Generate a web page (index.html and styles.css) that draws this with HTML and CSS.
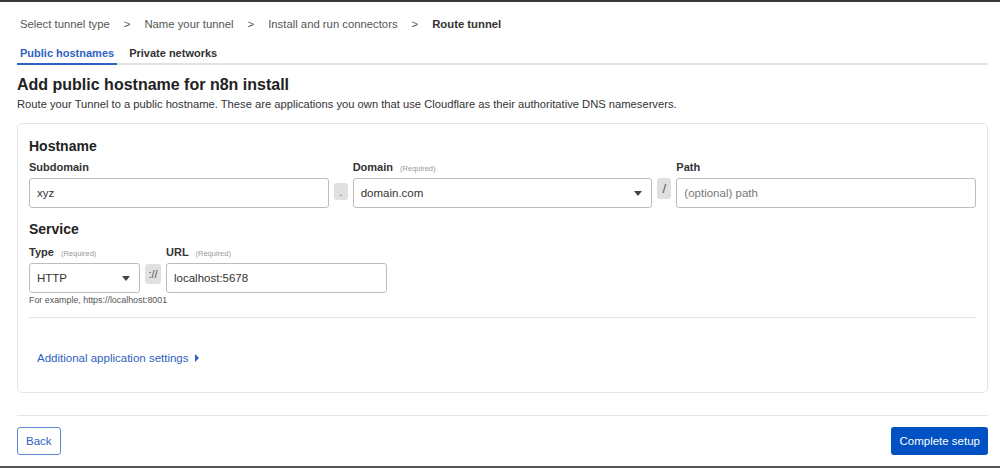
FILE: index.html
```html
<!DOCTYPE html>
<html lang="en">
<head>
    <meta charset="UTF-8">
    <meta name="viewport" content="width=device-width, initial-scale=1.0">
    <title>Route tunnel</title>
    <link rel="stylesheet" href="styles.css">
</head>
<body>
    <div class="page">

        <!-- Pasos del asistente -->
        <nav class="steps">
            <span>Select tunnel type</span>
            <span class="sep">&gt;</span>
            <span>Name your tunnel</span>
            <span class="sep">&gt;</span>
            <span>Install and run connectors</span>
            <span class="sep">&gt;</span>
            <span class="current">Route tunnel</span>
        </nav>

        <div class="tabs">
            <a class="tab active">Public hostnames</a>
            <a class="tab">Private networks</a>
        </div>

        <h1>Add public hostname for n8n install</h1>
        <p class="intro">Route your Tunnel to a public hostname. These are applications you own that use Cloudflare as their authoritative DNS nameservers.</p>

        <div class="card">
            <h2>Hostname</h2>
            <div class="row">
                <div class="field grow">
                    <label>Subdomain</label>
                    <input class="input" type="text" value="xyz">
                </div>
                <span class="addon dot">.</span>
                <div class="field grow">
                    <label>Domain <small>(Required)</small></label>
                    <div class="select">domain.com<span class="caret"></span></div>
                </div>
                <span class="addon slash">/</span>
                <div class="field grow">
                    <label>Path</label>
                    <input class="input" type="text" placeholder="(optional) path">
                </div>
            </div>

            <h2 class="service">Service</h2>
            <div class="row">
                <div class="field type">
                    <label>Type <small>(Required)</small></label>
                    <div class="select">HTTP<span class="caret"></span></div>
                    <p class="hint">For example, https://localhost:8001</p>
                </div>
                <span class="addon scheme">://</span>
                <div class="field url">
                    <label>URL <small>(Required)</small></label>
                    <input class="input" type="text" value="localhost:5678">
                </div>
            </div>

            <hr class="divider">

            <a class="more">Additional application settings <span class="arrow"></span></a>
        </div>

        <div class="footer">
            <button class="btn btn-outline">Back</button>
            <button class="btn btn-primary">Complete setup</button>
        </div>
    </div>
</body>
</html>
```

FILE: styles.css
```css
body {
    font-family: 'Liberation Sans', Arial, sans-serif;
    background-color: #FFFFFF;
    color: #222222;
    margin: 0;
    padding: 0;
    border-top: 2px solid #3a3a3a;
    border-bottom: 2px solid #555555;
    height: 464px;
    overflow: hidden;
}

.page {
    padding: 0 12px 0 17px;
}

.steps {
    display: flex;
    gap: 14px;
    font-size: 11.3px;
    color: #555555;
    padding: 16px 0 0 3px;
    height: 16px;
}

.steps .current {
    font-weight: bold;
    color: #333333;
}

.tabs {
    display: flex;
    gap: 9px;
    margin-top: 13px;
    border-bottom: 2px solid #e2e2e2;
}

.tab {
    font-size: 11px;
    font-weight: bold;
    color: #333333;
    padding: 0 3px 4px 3px;
    margin-bottom: -2px;
}

.tab.active {
    color: #2f62c4;
    border-bottom: 2px solid #2f62c4;
}

h1 {
    font-size: 16px;
    margin: 11px 0 0 0;
    color: #222222;
}

.intro {
    font-size: 11.2px;
    color: #333333;
    margin: 4px 0 0 0;
}

.card {
    margin-top: 13px;
    border: 1px solid #e4e4e4;
    border-radius: 5px;
    padding: 14px 11px 0 11px;
    height: 254px;
}

h2 {
    font-size: 14px;
    font-weight: 600;
    margin: 0;
    color: #222222;
}

h2.service {
    margin: 13px 0 2px 0;
}

.row {
    display: flex;
    gap: 5px;
    align-items: flex-start;
}

.field {
    display: flex;
    flex-direction: column;
}

.field.grow {
    flex: 1;
}

.field.type {
    width: 111px;
}

.field.url {
    width: 221px;
}

label {
    font-size: 11px;
    font-weight: bold;
    color: #333333;
    margin: 7px 0 4px 0;
    height: 13px;
}

label small {
    font-size: 7.5px;
    font-weight: normal;
    color: #999999;
    margin-left: 4px;
}

.input, .select {
    box-sizing: border-box;
    height: 30px;
    border: 1px solid #bdbdbd;
    border-radius: 3px;
    padding: 0 7px;
    font-family: inherit;
    font-size: 11.5px;
    color: #333333;
    background: #ffffff;
}

.input::placeholder {
    color: #777777;
}

.select {
    display: flex;
    align-items: center;
    justify-content: space-between;
}

.caret {
    width: 0;
    height: 0;
    border-left: 4px solid transparent;
    border-right: 4px solid transparent;
    border-top: 5px solid #444444;
    margin-right: 2px;
}

/* cajitas grises entre campos */
.addon {
    width: 14px;
    background: #e0e0e0;
    border-radius: 3px;
    font-size: 11px;
    color: #555555;
    display: flex;
    align-items: center;
    justify-content: center;
}

.addon.dot {
    margin-top: 29px;
    height: 17px;
}

.addon.slash {
    margin-top: 24px;
    height: 21px;
    font-size: 13px;
}

.addon.scheme {
    width: 16px;
    margin-top: 25px;
    height: 20px;
}

.hint {
    font-size: 8.9px;
    color: #555555;
    margin: 2px 0 0 0;
    white-space: nowrap;
}

.divider {
    border: none;
    border-top: 1px solid #e4e4e4;
    margin: 12px 0 0 0;
}

.more {
    display: inline-flex;
    align-items: center;
    gap: 6px;
    margin: 34px 0 0 8px;
    font-size: 11.5px;
    color: #2f5fbf;
}

.arrow {
    width: 0;
    height: 0;
    border-top: 4px solid transparent;
    border-bottom: 4px solid transparent;
    border-left: 4px solid #2f5fbf;
}

.footer {
    margin-top: 22px;
    border-top: 1px solid #e4e4e4;
    padding-top: 11px;
    display: flex;
    justify-content: space-between;
}

.btn {
    font-family: inherit;
    font-size: 11.5px;
    height: 28px;
    border-radius: 3px;
    padding: 0 8px;
    cursor: pointer;
}

.btn-outline {
    background: #ffffff;
    color: #2f5fbf;
    border: 1px solid #5b87d6;
}

.btn-primary {
    background: #0051c3;
    color: #ffffff;
    border: none;
}
```
